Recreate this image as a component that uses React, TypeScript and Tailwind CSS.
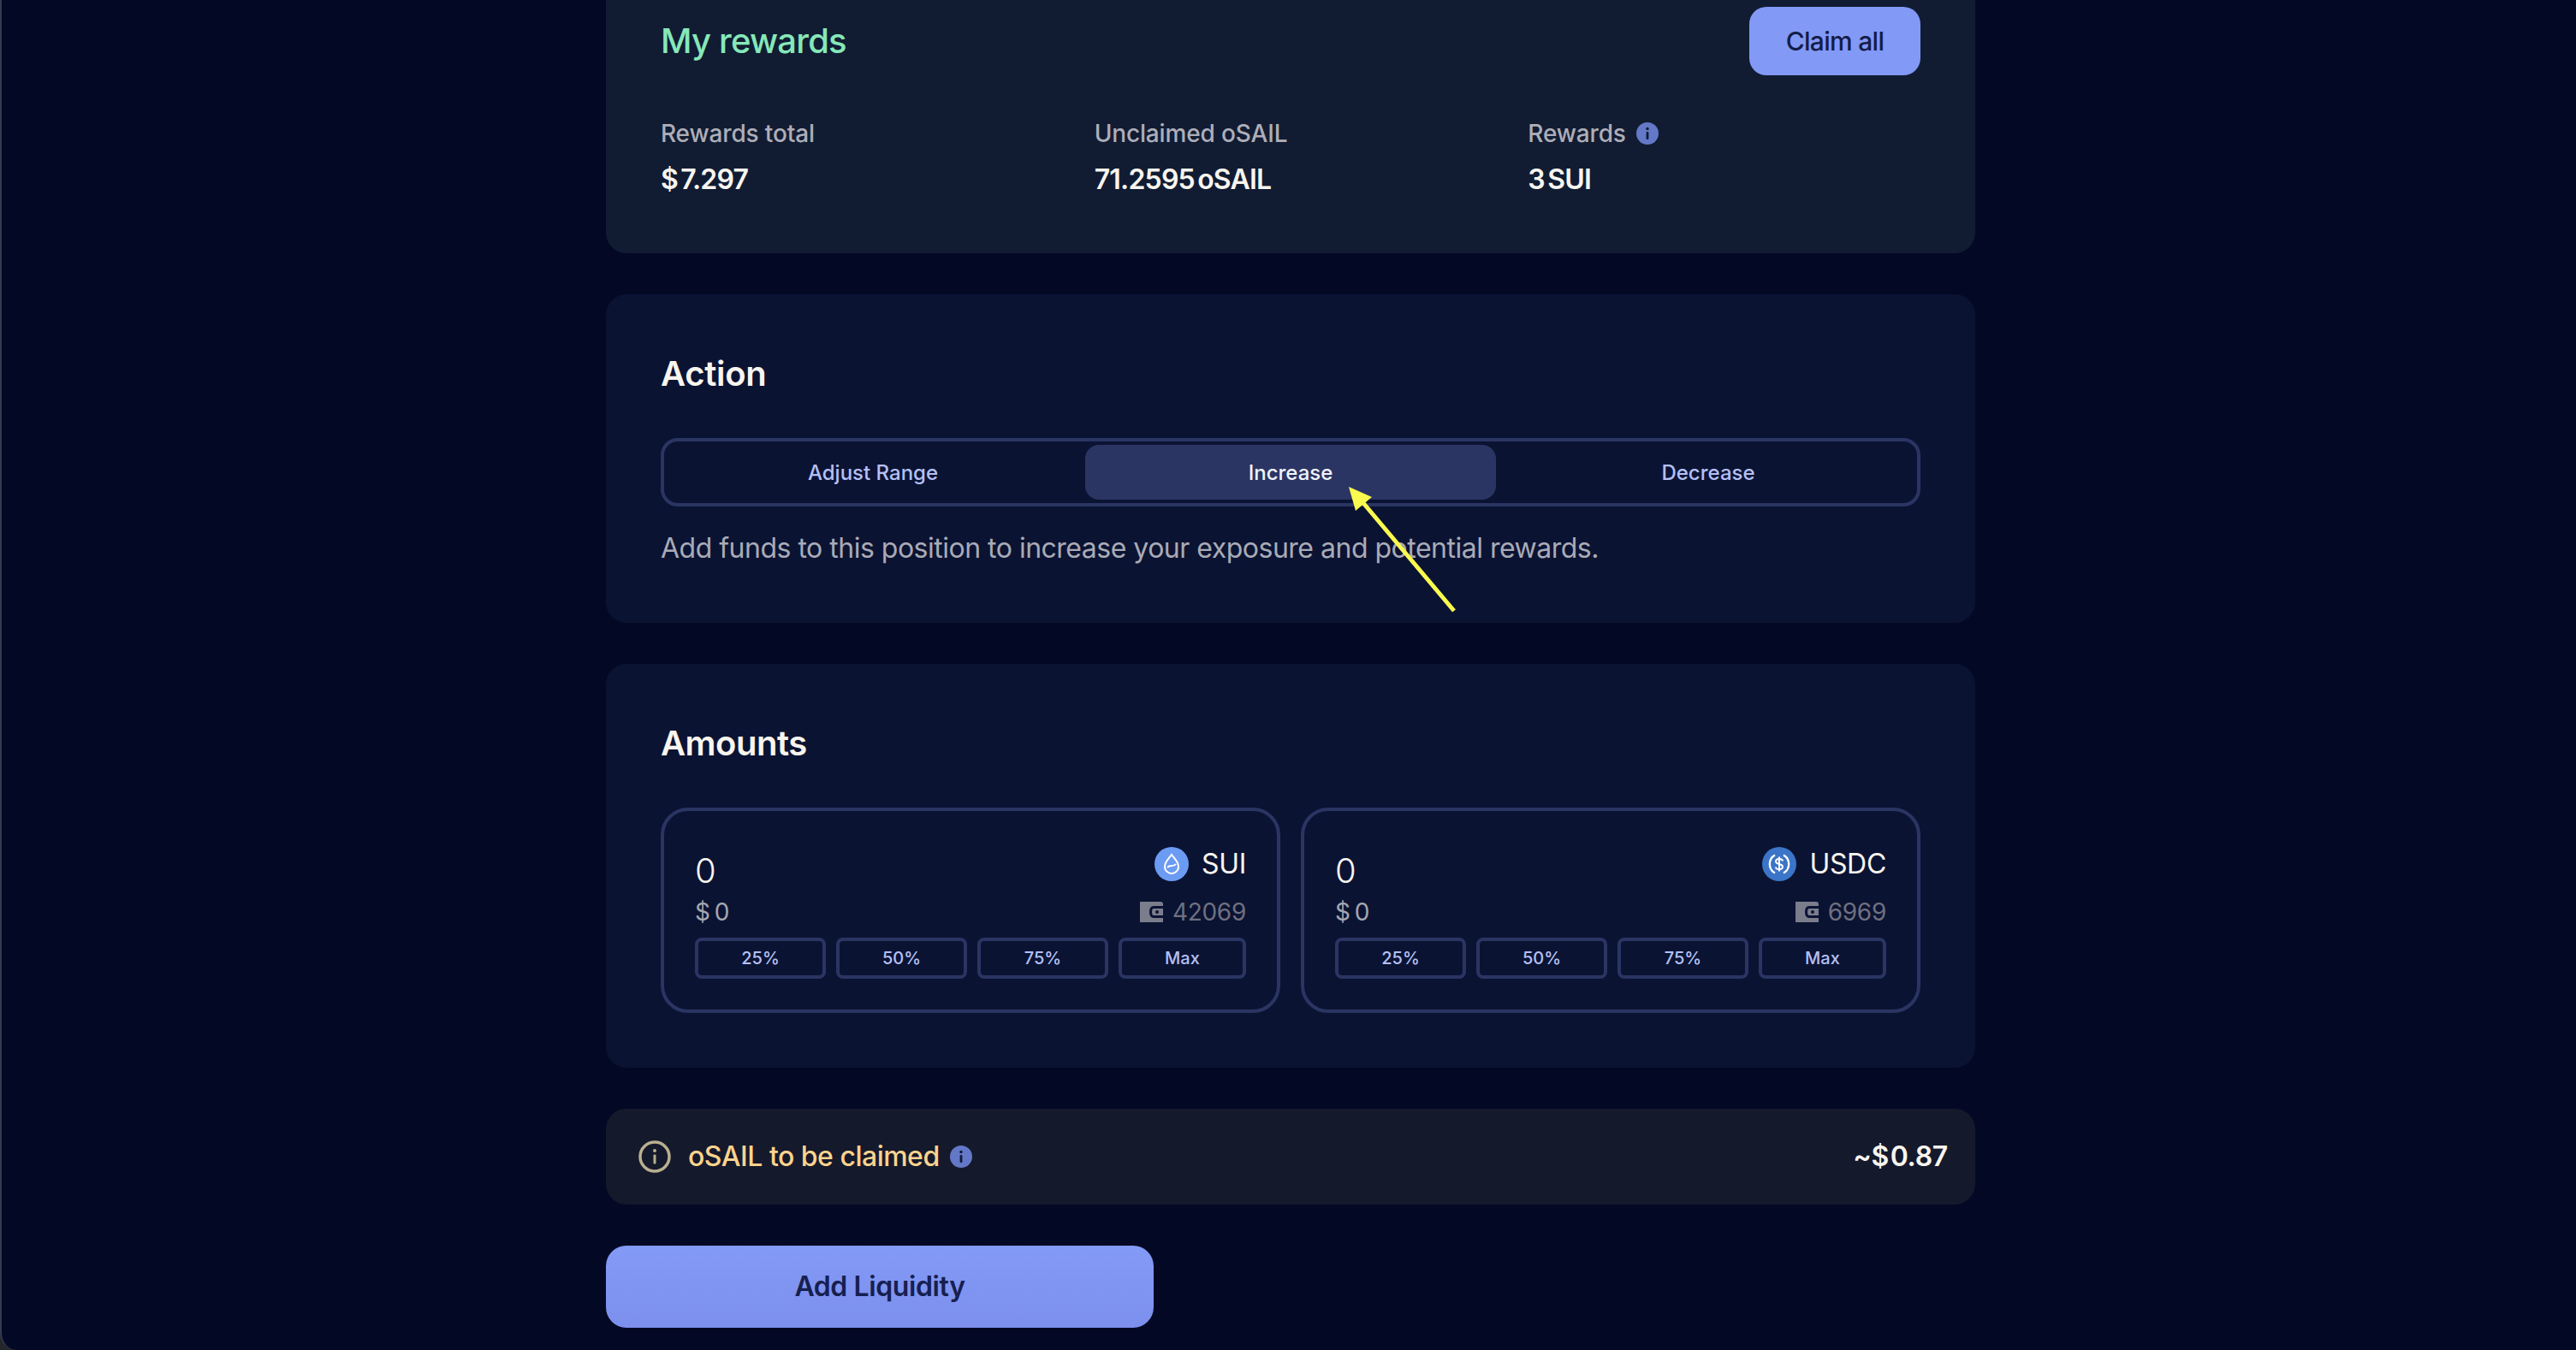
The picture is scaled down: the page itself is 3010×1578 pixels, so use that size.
const font = { fontFamily: 'Inter, "Liberation Sans", sans-serif' };

function InfoDot({ className }: { className?: string }) {
  return (
    <svg viewBox="0 0 26 26" className={className}>
      <circle cx="13" cy="13" r="13" fill="#6478c8" />
      <circle cx="13" cy="7.5" r="1.7" fill="#101a36" />
      <rect x="11.6" y="11" width="2.8" height="9" rx="1" fill="#101a36" />
    </svg>
  );
}

function Wallet() {
  return (
    <svg viewBox="0 0 27 24" className="h-6 w-[27px]">
      <path d="M0 0H24Q27 0 27 3V24H0Z" fill="#7b7d8c" />
      <path d="M27 5H16Q11 5 11 12T16 19H27V16H16Q14 16 14 12T16 8H27Z" fill="#0b1333" />
      <circle cx="20" cy="12" r="2" fill="#0b1333" />
    </svg>
  );
}

function SuiLogo() {
  return (
    <svg viewBox="0 0 40 40" className="h-10 w-10">
      <circle cx="20" cy="20" r="20" fill="#6c9bf3" />
      <path
        d="M20 9C22 12 28 17 28 23A8 8 0 0 1 12 23C12 17 18 12 20 9ZM15 24C18 20 22 24 25 20"
        fill="none"
        stroke="#fff"
        strokeWidth="2"
      />
    </svg>
  );
}

function UsdcLogo() {
  return (
    <svg viewBox="0 0 40 40" className="h-10 w-10">
      <circle cx="20" cy="20" r="20" fill="#3b75c8" />
      <path d="M15 9.5A12 12 0 0 0 15 30.5M25 9.5A12 12 0 0 1 25 30.5" fill="none" stroke="#fff" strokeWidth="2.4" />
      <path
        d="M24 16.5C24 14.5 22 14 20 14S16 15 16 17C16 21 24 19 24 23C24 25 22 26 20 26S16 25 16 23.5M20 11.5V28.5"
        fill="none"
        stroke="#fff"
        strokeWidth="2"
      />
    </svg>
  );
}

function Stat({ label, value, info }: { label: string; value: string; info?: boolean }) {
  return (
    <div className="flex flex-col">
      <div className="flex items-center gap-3 text-[28px] leading-10 font-medium tracking-[-0.15px] text-[#aeaeb8]">
        {label}
        {info && <InfoDot className="h-[26px] w-[26px]" />}
      </div>
      <div className="mt-[14px] text-[32px] leading-10 font-semibold tracking-[-0.8px] text-[#f8f5ee] [word-spacing:-4px]">
        {value}
      </div>
    </div>
  );
}

function AmountBox({ token, balance, logo }: { token: string; balance: string; logo: React.ReactNode }) {
  return (
    <div className="flex h-60 flex-col rounded-[32px] border-4 border-[#2b3563] px-9 pt-[30px]">
      <div className="flex h-[58px] items-start justify-between">
        <div className="mt-[14px] text-[40px] leading-[52px] font-light text-[#f8f5ee]">0</div>
        <div className="mt-3 flex items-center gap-[15px]">
          {logo}
          <span className="text-[32px] leading-10 tracking-[-0.3px] text-[#f8f5ee]">{token}</span>
        </div>
      </div>
      <div className="mt-[10px] flex h-10 items-center justify-between">
        <span className="text-[28px] tracking-[1px] text-[#a4a6b0] [word-spacing:-5px]">$ 0</span>
        <div className="flex items-center gap-[11px]">
          <Wallet />
          <span className="text-[28px] tracking-[-0.3px] text-[#6f7080]">{balance}</span>
        </div>
      </div>
      <div className="mt-[10px] grid grid-cols-[153px_153px_153px_1fr] gap-3">
        {['25%', '50%', '75%', 'Max'].map((p) => (
          <div
            key={p}
            className="flex h-12 items-center justify-center rounded-lg border-4 border-[#2b3563] text-[20px] font-medium text-[#b4c0f5]"
          >
            {p}
          </div>
        ))}
      </div>
    </div>
  );
}

export default function App() {
  return (
    <div className="relative h-[1578px] w-[3010px] overflow-hidden bg-[#24262c]" style={font}>
      <div className="h-full w-full rounded-bl-[20px] border-l-2 border-[#343a50] bg-[#030924] pl-[706px]">
        <div className="flex w-[1600px] flex-col gap-12">
          {/* rewards */}
          <section className="h-[296px] rounded-b-3xl bg-[#111c33] px-16 pt-2">
            <div className="flex h-20 items-center justify-between">
              <h2 className="text-[40px] font-medium tracking-[-0.8px] text-[#86e8b8]">My rewards</h2>
              <button className="h-20 w-[200px] rounded-[20px] bg-[#8299f6] text-[30px] font-medium tracking-[-0.7px] text-[#141c47]">
                Claim all
              </button>
            </div>
            <div className="mt-12 grid grid-cols-3 gap-12">
              <Stat label="Rewards total" value="$ 7.297" />
              <Stat label="Unclaimed oSAIL" value="71.2595 oSAIL" />
              <Stat label="Rewards" value="3 SUI" info />
            </div>
          </section>

          {/* action */}
          <section className="h-[384px] rounded-3xl bg-[#0b1333] px-16 pt-[68px]">
            <h2 className="text-[40px] leading-[50px] font-semibold tracking-[-0.3px] text-[#f8f5ee]">Action</h2>
            <div className="mt-[50px] grid h-20 grid-cols-3 gap-2 rounded-[20px] border-4 border-[#2b3563] p-1">
              <div className="flex items-center justify-center rounded-2xl pt-0.5 text-[24px] font-medium text-[#b4c0f5]">
                Adjust Range
              </div>
              <div className="flex items-center justify-center rounded-2xl bg-[#2b3563] pt-0.5 text-[24px] font-medium text-[#f1f2fb]">
                Increase
              </div>
              <div className="flex items-center justify-center rounded-2xl pt-0.5 text-[24px] font-medium text-[#b4c0f5]">
                Decrease
              </div>
            </div>
            <p className="mt-[29px] text-[32px] leading-10 tracking-[-0.5px] text-[#a9abb5]">
              Add funds to this position to increase your exposure and potential rewards.
            </p>
          </section>

          {/* amounts */}
          <section className="h-[472px] rounded-3xl bg-[#0b1333] px-16 pt-[68px]">
            <h2 className="text-[40px] leading-[50px] font-semibold tracking-[-0.5px] text-[#f8f5ee]">Amounts</h2>
            <div className="mt-[50px] grid grid-cols-2 gap-6">
              <AmountBox token="SUI" balance="42069" logo={<SuiLogo />} />
              <AmountBox token="USDC" balance="6969" logo={<UsdcLogo />} />
            </div>
          </section>

          {/* osail note */}
          <section className="flex h-28 items-center justify-between rounded-3xl bg-[#15192c] pr-8 pl-[38px]">
            <div className="flex items-center">
              <svg viewBox="0 0 38 38" className="h-[38px] w-[38px]">
                <circle cx="19" cy="19" r="17" fill="none" stroke="#b8b08f" strokeWidth="3.5" />
                <circle cx="19" cy="12" r="2" fill="#b8b08f" />
                <rect x="17.5" y="16.5" width="3" height="11" rx="1" fill="#b8b08f" />
              </svg>
              <span className="ml-[20px] text-[32px] font-medium tracking-[-0.5px] text-[#fbd38d]">oSAIL to be claimed</span>
              <InfoDot className="ml-3 h-[26px] w-[26px]" />
            </div>
            <span className="text-[32px] font-semibold tracking-[-0.3px] text-[#f8f5ee] [word-spacing:-6px]">~$ 0.87</span>
          </section>

          <button className="h-24 w-[640px] rounded-3xl bg-gradient-to-b from-[#839af6] to-[#7c8fed] text-[32px] font-semibold tracking-[-0.4px] text-[#16204f]">
            Add Liquidity
          </button>
        </div>
      </div>

      {/* annotation arrow */}
      <svg viewBox="0 0 3010 1578" className="pointer-events-none absolute inset-0 h-[1578px] w-[3010px]">
        <path d="M1699 714L1588 582" stroke="#fbfb4f" strokeWidth="5" fill="none" />
        <path d="M1576 569L1584 597L1603 581Z" fill="#fbfb4f" />
      </svg>
    </div>
  );
}
